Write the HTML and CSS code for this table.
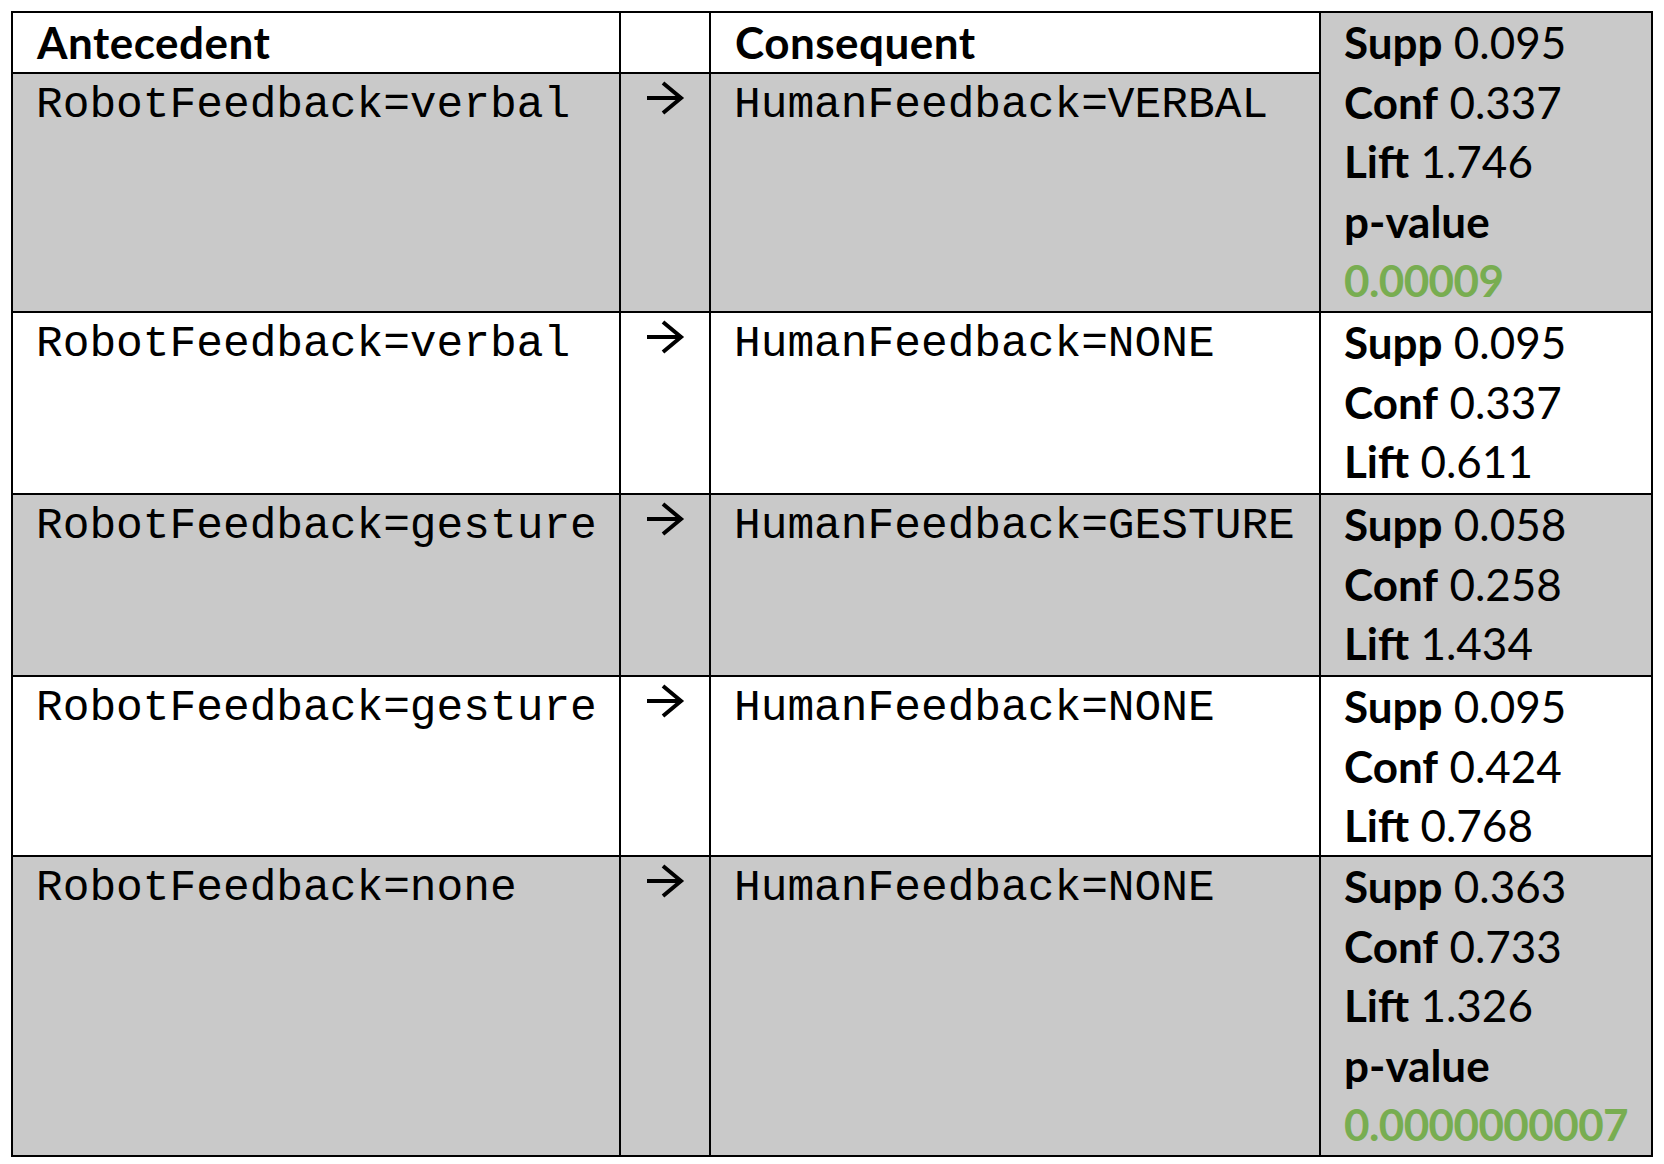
FILE: index.html
```html
<!DOCTYPE html>
<html lang="en">
<head>
<meta charset="utf-8">
<title>Association rules</title>
<link rel="stylesheet" href="styles.css">
</head>
<body>
<div class="rules">
  <div class="cell head">Antecedent</div>
  <div class="cell head"></div>
  <div class="cell head">Consequent</div>
  <div class="cell stats grey span2">
    <div class="ln"><b>Supp</b> 0.095</div>
    <div class="ln"><b>Conf</b> 0.337</div>
    <div class="ln"><b>Lift</b> 1.746</div>
    <div class="ln"><b>p-value</b></div>
    <div class="ln green"><b>0.00009</b></div>
  </div>

  <div class="cell mono grey">RobotFeedback=verbal</div>
  <div class="cell arrow grey"><svg class="arr" width="40" height="36" viewBox="0 0 40 36"><path d="M2 18H35M18 3L36 18L18 33" fill="none" stroke="#000" stroke-width="4"/></svg></div>
  <div class="cell mono grey">HumanFeedback=VERBAL</div>

  <div class="cell mono">RobotFeedback=verbal</div>
  <div class="cell arrow"><svg class="arr" width="40" height="36" viewBox="0 0 40 36"><path d="M2 18H35M18 3L36 18L18 33" fill="none" stroke="#000" stroke-width="4"/></svg></div>
  <div class="cell mono">HumanFeedback=NONE</div>
  <div class="cell stats">
    <div class="ln"><b>Supp</b> 0.095</div>
    <div class="ln"><b>Conf</b> 0.337</div>
    <div class="ln"><b>Lift</b> 0.611</div>
  </div>

  <div class="cell mono grey">RobotFeedback=gesture</div>
  <div class="cell arrow grey"><svg class="arr" width="40" height="36" viewBox="0 0 40 36"><path d="M2 18H35M18 3L36 18L18 33" fill="none" stroke="#000" stroke-width="4"/></svg></div>
  <div class="cell mono grey">HumanFeedback=GESTURE</div>
  <div class="cell stats grey">
    <div class="ln"><b>Supp</b> 0.058</div>
    <div class="ln"><b>Conf</b> 0.258</div>
    <div class="ln"><b>Lift</b> 1.434</div>
  </div>

  <div class="cell mono">RobotFeedback=gesture</div>
  <div class="cell arrow"><svg class="arr" width="40" height="36" viewBox="0 0 40 36"><path d="M2 18H35M18 3L36 18L18 33" fill="none" stroke="#000" stroke-width="4"/></svg></div>
  <div class="cell mono">HumanFeedback=NONE</div>
  <div class="cell stats">
    <div class="ln"><b>Supp</b> 0.095</div>
    <div class="ln"><b>Conf</b> 0.424</div>
    <div class="ln"><b>Lift</b> 0.768</div>
  </div>

  <div class="cell mono grey">RobotFeedback=none</div>
  <div class="cell arrow grey"><svg class="arr" width="40" height="36" viewBox="0 0 40 36"><path d="M2 18H35M18 3L36 18L18 33" fill="none" stroke="#000" stroke-width="4"/></svg></div>
  <div class="cell mono grey">HumanFeedback=NONE</div>
  <div class="cell stats grey">
    <div class="ln"><b>Supp</b> 0.363</div>
    <div class="ln"><b>Conf</b> 0.733</div>
    <div class="ln"><b>Lift</b> 1.326</div>
    <div class="ln"><b>p-value</b></div>
    <div class="ln green"><b>0.0000000007</b></div>
  </div>
</div>
</body>
</html>
```

FILE: styles.css
```css
html, body {
  margin: 0;
  padding: 0;
  background: #ffffff;
}

.rules {
  display: grid;
  grid-template-columns: 608px 90px 610px 332px;
  grid-template-rows: 61px 239px 182px 182px 180px 300px;
  margin: 11px 0 0 11px;
  width: max-content;
  border-top: 2px solid #000;
  border-left: 2px solid #000;
  color: #000;
}

.cell {
  box-sizing: border-box;
  border-right: 2px solid #000;
  border-bottom: 2px solid #000;
  background: #ffffff;
  overflow: hidden;
}

.grey {
  background: #c9c9c9;
}

.head {
  font-family: Lato, "Open Sans", sans-serif;
  font-weight: 700;
  font-size: 44px;
  letter-spacing: 0.5px;
  line-height: 59px;
  padding-left: 24px;
}

.span2 {
  grid-row: span 2;
}

.mono {
  font-family: "Liberation Mono", "Courier New", monospace;
  font-size: 44.5px;
  line-height: 56px;
  padding-top: 3px;
  padding-left: 23px;
  white-space: nowrap;
}

.arrow {
  display: flex;
  justify-content: center;
  align-items: flex-start;
  padding-top: 6px;
}

.arr {
  display: block;
}

.stats {
  font-family: Lato, "Open Sans", sans-serif;
  font-size: 44px;
  padding-left: 23px;
}

.stats .ln {
  line-height: 59.6px;
  white-space: nowrap;
}

.stats b {
  font-weight: 700;
}

.green {
  color: #78ad51;
  letter-spacing: -0.6px;
}
```
